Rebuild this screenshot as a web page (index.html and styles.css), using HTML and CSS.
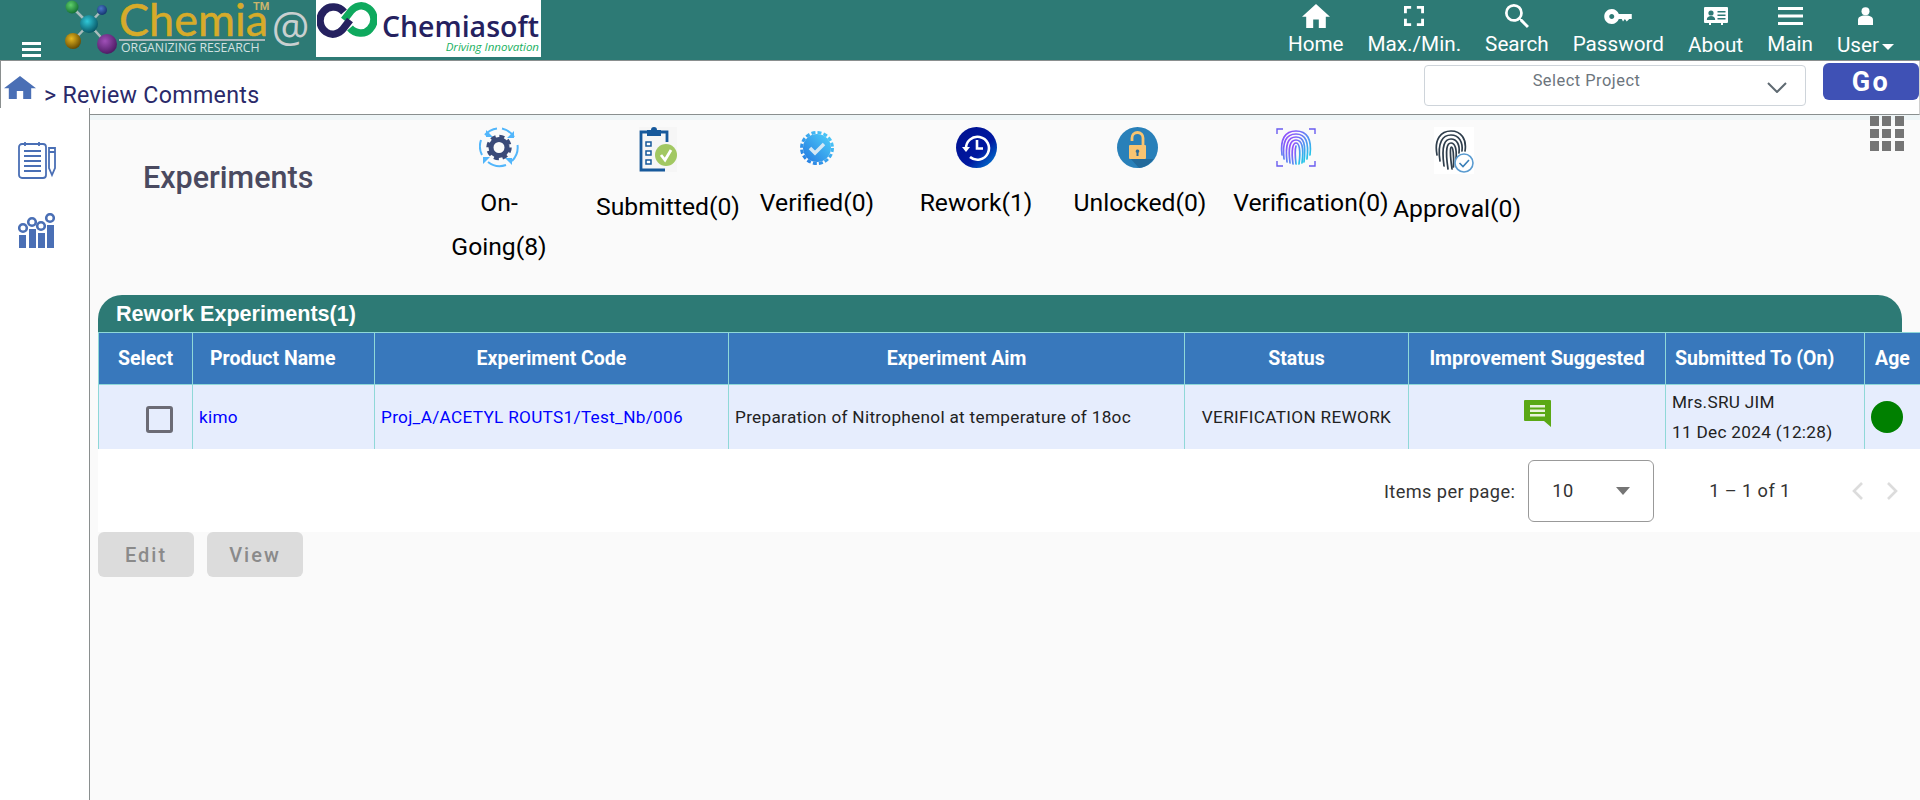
FILE: index.html
```html
<!DOCTYPE html>
<html lang="en">
<head>
<meta charset="UTF-8">
<meta name="viewport" content="width=device-width, initial-scale=1.0">
<title>Review Comments</title>
<link rel="stylesheet" href="styles.css">
</head>
<body>
<header class="topbar">
  <svg class="menu-toggle" viewBox="0 0 19 15"><path d="M0 0h19v3H0zM0 6h19v3H0zM0 12h19v3H0z" fill="#fff"/></svg>
  <svg class="molecule" viewBox="0 0 58 56">
    <defs>
      <radialGradient id="ballGreen" cx=".4" cy=".35" r=".7"><stop offset="0" stop-color="#5fd06a"/><stop offset="1" stop-color="#0f6a30"/></radialGradient>
      <radialGradient id="ballBlue" cx=".4" cy=".35" r=".7"><stop offset="0" stop-color="#4a78c8"/><stop offset="1" stop-color="#12306a"/></radialGradient>
      <radialGradient id="ballCyan" cx=".4" cy=".35" r=".7"><stop offset="0" stop-color="#30c8d8"/><stop offset="1" stop-color="#06505e"/></radialGradient>
      <radialGradient id="ballGold" cx=".4" cy=".35" r=".7"><stop offset="0" stop-color="#e8b820"/><stop offset="1" stop-color="#5e4400"/></radialGradient>
      <radialGradient id="ballPurple" cx=".4" cy=".35" r=".7"><stop offset="0" stop-color="#a050b8"/><stop offset="1" stop-color="#48185e"/></radialGradient>
    </defs>
    <path d="M7 7L24 24M37 10L24 24M8 41L24 24M42 44L24 24" stroke="#a8bcbc" stroke-width="2.5"/>
    <circle cx="7" cy="7" r="6.5" fill="url(#ballGreen)"/>
    <circle cx="37" cy="10" r="5" fill="url(#ballBlue)"/>
    <circle cx="24" cy="24" r="9" fill="url(#ballCyan)"/>
    <circle cx="8" cy="41" r="8" fill="url(#ballGold)"/>
    <circle cx="42" cy="44" r="10" fill="url(#ballPurple)"/>
  </svg>
  <div class="brand">
    <span class="brand-name">Chemia</span>
    <span class="brand-tm">TM</span>
    <span class="brand-tag">ORGANIZING RESEARCH</span>
  </div>
  <span class="brand-at">@</span>
  <div class="partner">
    <svg class="partner-mark" viewBox="0 0 60 36" fill="none" stroke-width="7.5">
      <path d="M33 26C38 32 48 33 53 27C59 21 58 11 51 6C45 2 38 4 34 9L27 18" stroke="#0fa95e"/>
      <path d="M27 10C22 4 12 3 7 9C1 15 2 25 9 30C15 34 22 32 26 27L33 18" stroke="#25215f"/>
    </svg>
    <div class="partner-text">
      <span class="partner-name">Chemiasoft</span>
      <span class="partner-tag">Driving Innovation</span>
    </div>
  </div>
  <nav class="topnav">
    <a class="topnav-item">
      <span class="topnav-icon"><svg width="28" height="24" viewBox="2 3 20 17"><path d="M10 20v-6h4v6h5v-8h3L12 3 2 12h3v8z" fill="#fff"/></svg></span>
      <span class="topnav-label">Home</span>
    </a>
    <a class="topnav-item">
      <span class="topnav-icon"><svg width="20" height="20" viewBox="5 5 14 14"><path d="M7 14H5v5h5v-2H7v-3zm-2-4h2V7h3V5H5v5zm12 7h-3v2h5v-5h-2v3zM14 5v2h3v3h2V5h-5z" fill="#fff"/></svg></span>
      <span class="topnav-label">Max./Min.</span>
    </a>
    <a class="topnav-item">
      <span class="topnav-icon"><svg width="26" height="24" viewBox="3 3 17.5 17.5"><path d="M15.5 14h-.79l-.28-.27A6.47 6.47 0 0 0 16 9.5 6.5 6.5 0 1 0 9.5 16c1.61 0 3.09-.59 4.23-1.57l.27.28v.79l5 4.99L20.49 19l-4.99-5zm-6 0C7.01 14 5 11.99 5 9.5S7.01 5 9.5 5 14 7.01 14 9.5 11.99 14 9.5 14z" fill="#fff"/></svg></span>
      <span class="topnav-label">Search</span>
    </a>
    <a class="topnav-item">
      <span class="topnav-icon"><svg width="30" height="15" viewBox="1 6 22 12"><path d="M12.65 10C11.83 7.67 9.61 6 7 6c-3.31 0-6 2.69-6 6s2.69 6 6 6c2.61 0 4.83-1.67 5.65-4H15l1 2 1.5-2 1.5 2 2-2h2v-4H12.65zM7 14c-1.1 0-2-.9-2-2s.9-2 2-2 2 .9 2 2-.9 2-2 2z" fill="#fff"/></svg></span>
      <span class="topnav-label">Password</span>
    </a>
    <a class="topnav-item">
      <span class="topnav-icon"><svg width="24" height="18" viewBox="0 0 24 18"><path d="M1 0h22a1 1 0 0 1 1 1v14a1 1 0 0 1-1 1h-4v2h-2v-2H7v2H5v-2H1a1 1 0 0 1-1-1V1a1 1 0 0 1 1-1z" fill="#fff"/><circle cx="7" cy="6" r="2.6" fill="#2d7a75"/><path d="M2.800 13c0-3 2-4 4.200-4s4.200 1 4.200 4zM13.500 4h8v1.500h-8zM13.500 7.500h8V9h-8zM13.500 11h8v1.500h-8z" fill="#2d7a75"/></svg></span>
      <span class="topnav-label topnav-label-low">About</span>
    </a>
    <a class="topnav-item">
      <span class="topnav-icon"><svg width="25" height="18" viewBox="0 0 25 18"><path d="M0 0h25v3H0zM0 7.500h25v3H0zM0 15h25v3H0z" fill="#fff"/></svg></span>
      <span class="topnav-label">Main</span>
    </a>
    <a class="topnav-item">
      <span class="topnav-icon"><svg width="15" height="18" viewBox="0 0 15 18"><circle cx="7.500" cy="4.200" r="4" fill="#fff"/><path d="M0 18v-5c0-3 2.500-4.500 7.500-4.500S15 10 15 13v5z" fill="#fff"/></svg></span>
      <span class="topnav-label topnav-label-low">User<i class="caret"></i></span>
    </a>
  </nav>
</header>

<div class="subbar">
  <div class="crumbs">
    <svg class="crumbs-home" width="32" height="23" viewBox="2 3 20 17" preserveAspectRatio="none"><path d="M10 20v-6h4v6h5v-8h3L12 3 2 12h3v8z" fill="#4a6fb5"/></svg>
    <span class="crumbs-text">&gt; Review Comments</span>
  </div>
  <div class="project-select">
    <span>Select Project</span>
    <svg class="project-chevron" width="20" height="11" viewBox="0 0 20 11"><path d="M1 1l9 9 9-9" fill="none" stroke="#5f6a72" stroke-width="2"/></svg>
  </div>
  <button class="go-btn">Go</button>
</div>

<div class="workspace">
  <aside class="sidebar">
    <svg class="side-icon" width="38" height="37" viewBox="0 0 38 37" fill="none" stroke="#4a6fb5" stroke-width="1.800">
      <rect x="1" y="2" width="27" height="34" rx="3"/>
      <path d="M7 0v4M21 0v4M6 9h17M6 14h17M6 19h17M6 24h17M6 29h17"/>
      <path d="M31 6h6v20l-3 7-3-7zM31 10h6" />
    </svg>
    <svg class="side-icon" width="37" height="35" viewBox="0 0 37 35">
      <path d="M1 22h7v13H1zM11 16h7v19h-7zM20 20h7v15h-7zM29 12h7v23h-7z" fill="#4a6fb5"/>
      <g fill="#fff" stroke="#4a6fb5" stroke-width="2.600">
        <circle cx="5" cy="15" r="3.800"/><circle cx="14" cy="9" r="3.800"/><circle cx="23" cy="13" r="3.800"/><circle cx="32" cy="5" r="3.800"/>
      </g>
    </svg>
  </aside>

  <main class="content">
    <div class="content-top"></div>
    <div class="content-band"></div>
    <svg class="apps-grid" width="34" height="35" viewBox="0 0 34 35"><path d="M0 0h9v10H0zM12 0h9v10h-9zM25 0h9v10h-9zM0 13h9v9H0zM12 13h9v9h-9zM25 13h9v9h-9zM0 25h9v10H0zM12 25h9v10h-9zM25 25h9v10h-9z" fill="#757575"/></svg>

    <section class="exp-tabs">
      <h2 class="exp-title">Experiments</h2>

      <div class="exp-tab">
        <svg class="exp-icon" width="40" height="41" viewBox="0 0 40 41">
          <g fill="none" stroke="#52b6fb" stroke-width="2">
            <path d="M6 8A19 19 0 0 1 18 1.500M23 1.500A19 19 0 0 1 35 10M38.500 18A19 19 0 0 1 33 34M27 38A19 19 0 0 1 9 35M3 28A19 19 0 0 1 2 13"/>
          </g>
          <path d="M35 4v7h-7zM7 3v7h7zM33 38v-7h-7zM4 37v-7h7z" fill="#52b6fb"/>
          <circle cx="20" cy="20.500" r="8" fill="none" stroke="#3a4a78" stroke-width="5"/>
          <circle cx="20" cy="20.500" r="11" fill="none" stroke="#3a4a78" stroke-width="3.500" stroke-dasharray="5 3.640"/>
        </svg>
        <span class="exp-label exp-label-wrap">On-Going(8)</span>
      </div>

      <div class="exp-tab">
        <svg class="exp-icon exp-icon-submitted" width="38" height="45" viewBox="0 0 38 45">
          <rect width="38" height="45" fill="#f6f6f6"/>
          <path d="M8 5H2v38h24" fill="none" stroke="#17599b" stroke-width="2.800"/>
          <path d="M22 5h6v10" fill="none" stroke="#17599b" stroke-width="2.800"/>
          <path d="M8 3h4a3 3 0 0 1 6 0h4v6H8z" fill="#17599b"/>
          <path d="M7 15h5v4H7zM7 24h5v4H7zM7 33h5v4H7z" fill="#fff" stroke="#17599b" stroke-width="1.500"/>
          <circle cx="27" cy="28" r="11" fill="#a2c862"/>
          <path d="M22 28l4 5 6-10" fill="none" stroke="#fff" stroke-width="2.800"/>
        </svg>
        <span class="exp-label">Submitted(0)</span>
      </div>

      <div class="exp-tab">
        <svg class="exp-icon" width="40" height="41" viewBox="0 0 40 41">
          <defs><linearGradient id="badgeFill" x1="0" y1="1" x2="1" y2="0"><stop offset="0" stop-color="#2478e0"/><stop offset="1" stop-color="#4fd0fa"/></linearGradient></defs>
          <circle cx="20" cy="21" r="14" fill="url(#badgeFill)"/>
          <circle cx="20" cy="21" r="15.500" fill="none" stroke="url(#badgeFill)" stroke-width="3" stroke-dasharray="4 2.090"/>
          <path d="M13 21l5 5 9-9" fill="none" stroke="#d5e8f5" stroke-width="3.500"/>
        </svg>
        <span class="exp-label">Verified(0)</span>
      </div>

      <div class="exp-tab">
        <svg class="exp-icon" width="41" height="41" viewBox="0 0 41 41">
          <defs><linearGradient id="reworkFill" x1="0" y1="0" x2="1" y2="1"><stop offset="0" stop-color="#00108e"/><stop offset=".6" stop-color="#0018a0"/><stop offset="1" stop-color="#0088d8"/></linearGradient></defs>
          <circle cx="20.500" cy="20.500" r="20.500" fill="url(#reworkFill)"/>
          <path d="M10 22A11.500 11.500 0 1 1 14 30" fill="none" stroke="#fff" stroke-width="2.600"/>
          <path d="M6 20h8l-4 5z" fill="#fff"/>
          <path d="M21 13v8.500h6" fill="none" stroke="#fff" stroke-width="2.600"/>
        </svg>
        <span class="exp-label">Rework(1)</span>
      </div>

      <div class="exp-tab">
        <svg class="exp-icon exp-icon-unlocked" width="41" height="41" viewBox="0 0 41 41">
          <circle cx="20.500" cy="20.500" r="20.500" fill="#2980b9"/>
          <path d="M13 20h15v12l8.500 0A20.500 20.500 0 0 1 22 40.900L13 31z" fill="#236a9b"/>
          <path d="M26 18v-7a5.500 5.500 0 0 0-11 0v3" fill="none" stroke="#f8c471" stroke-width="2.800"/>
          <rect x="12" y="18" width="17" height="14" rx="1" fill="#f8c471"/>
          <path d="M20.500 22.500a1.800 1.800 0 0 1 1 3.300V29h-2v-3.200a1.800 1.800 0 0 1 1-3.300z" fill="#2a6a96"/>
        </svg>
        <span class="exp-label">Unlocked(0)</span>
      </div>

      <div class="exp-tab">
        <svg class="exp-icon exp-icon-print" width="40" height="41" viewBox="0 0 40 41">
          <defs><linearGradient id="printFill" x1="0" y1="0" x2="1" y2="1"><stop offset="0" stop-color="#a040ff"/><stop offset="1" stop-color="#20c8e8"/></linearGradient></defs>
          <path d="M1 7V2h6M33 2h6v5M1 34v5h6M33 39h6v-5" fill="none" stroke="#6a5cf0" stroke-width="1.400"/>
          <g fill="none" stroke="url(#printFill)" stroke-width="1.700" stroke-linecap="round">
            <path d="M6 28C4 12 9 4 20 4s16 8 14 24"/>
            <path d="M8 32C6 15 10 7 20 7s13 8 11 25"/>
            <path d="M11 35C9 17 12 10 20 10s10 7 8 25"/>
            <path d="M14 36C12 20 14 13 20 13s8 7 6 23"/>
            <path d="M17 37C15 22 17 16 20 16s5 6 3 21"/>
            <path d="M20 37C19 28 19 22 20 19"/>
          </g>
        </svg>
        <span class="exp-label">Verification(0)</span>
      </div>

      <div class="exp-tab">
        <svg class="exp-icon exp-icon-approval" width="40" height="47" viewBox="0 0 40 47">
          <rect width="40" height="47" fill="#fff"/>
          <g fill="none" stroke="#2f3e4c" stroke-width="1.700" stroke-linecap="round">
            <path d="M3 28C0 12 7 4 17 4s16 8 14 20"/>
            <path d="M6 34C3 15 9 8 17 8s12 7 11 16"/>
            <path d="M10 39C7 18 11 12 17 12s9 6 8 14"/>
            <path d="M14 42C11 22 13 16 17 16s6 6 5 16"/>
            <path d="M18 42C16 28 16 20 17.500 20s2.500 8 2 20"/>
          </g>
          <circle cx="30" cy="36" r="9" fill="#fff" stroke="#5a9bd0" stroke-width="1.600"/>
          <path d="M25.500 36l3.500 3.500 6-6.500" fill="none" stroke="#3a7fb8" stroke-width="1.600"/>
        </svg>
        <span class="exp-label">Approval(0)</span>
      </div>
    </section>

    <section class="rework">
      <div class="rework-title">Rework Experiments(1)</div>
      <table class="rework-table">
        <colgroup>
          <col class="col-select"><col class="col-product"><col class="col-code"><col class="col-aim">
          <col class="col-status"><col class="col-improve"><col class="col-submitted"><col class="col-age">
        </colgroup>
        <thead>
          <tr>
            <th>Select</th>
            <th class="th-left th-product">Product Name</th>
            <th>Experiment Code</th>
            <th>Experiment Aim</th>
            <th>Status</th>
            <th>Improvement Suggested</th>
            <th class="th-left th-submitted">Submitted To (On)</th>
            <th>Age</th>
          </tr>
        </thead>
        <tbody>
          <tr>
            <td class="cell-check"><span class="checkbox"></span></td>
            <td class="cell-link">kimo</td>
            <td class="cell-link">Proj_A/ACETYL ROUTS1/Test_Nb/006</td>
            <td>Preparation of Nitrophenol at temperature of 18oc</td>
            <td class="cell-status">VERIFICATION REWORK</td>
            <td class="cell-comment">
              <svg width="27" height="27" viewBox="0 0 27 27"><path d="M1 0h25a1 1 0 0 1 1 1v26l-7-6H1a1 1 0 0 1-1-1V1a1 1 0 0 1 1-1z" fill="#5aa815"/><path d="M6 5h15v2.500H6zM6 9.500h15V12H6zM6 14h15v2.500H6z" fill="#e8f2dc"/></svg>
            </td>
            <td class="cell-submitted">Mrs.SRU JIM<br>11 Dec 2024 (12:28)</td>
            <td class="cell-age"><span class="age-dot"></span></td>
          </tr>
        </tbody>
      </table>
      <div class="paginator">
        <span class="paginator-label">Items per page:</span>
        <div class="page-size">
          <span>10</span>
          <i class="page-size-arrow"></i>
        </div>
        <span class="paginator-range">1 – 1 of 1</span>
        <svg class="paginator-nav" width="48" height="18" viewBox="0 0 48 18" fill="none" stroke="#dcdcdc" stroke-width="2.600"><path d="M11 1L3 9l8 8M37 1l8 8-8 8"/></svg>
      </div>
    </section>

    <div class="actions">
      <button class="action-btn">Edit</button>
      <button class="action-btn">View</button>
    </div>
  </main>
</div>
</body>
</html>
```

FILE: styles.css
```css
/* Page */
html, body {
  margin: 0;
  height: 100%;
}
body {
  display: flex;
  flex-direction: column;
  height: 800px;
  overflow: hidden;
  font-family: Roboto, "Liberation Sans", sans-serif;
  background-color: #fff;
}

/* Top bar */
.topbar {
  display: flex;
  flex: none;
  height: 60px;
  background-color: #2d7a75;
  border-bottom: 1px solid #8a8f8f;
  color: #fff;
}
.menu-toggle {
  flex: none;
  width: 19px;
  height: 15px;
  margin: 42px 0 0 22px;
}
.molecule {
  flex: none;
  width: 58px;
  height: 56px;
  margin-left: 24px;
}
.brand {
  position: relative;
  flex: none;
  width: 146px;
  margin-left: -4px;
  display: flex;
  flex-direction: column;
}
.brand-name {
  font-family: Lato, sans-serif;
  font-size: 45px;
  line-height: 39px;
  height: 39px;
  color: #d6ab2a;
  -webkit-text-stroke: .5px #d6ab2a;
  border-bottom: 2px solid #a9b7b9;
}
.brand-tm {
  position: absolute;
  top: 0;
  left: 134px;
  font-size: 11px;
  font-weight: 700;
  color: #c9b56c;
}
.brand-tag {
  margin-left: 2px;
  font-family: "Open Sans", sans-serif;
  font-size: 12.300px;
  line-height: 14px;
  white-space: nowrap;
  color: #d3e2e2;
}
.brand-at {
  flex: none;
  width: 51px;
  font-family: "Open Sans", sans-serif;
  font-size: 42px;
  line-height: 52px;
  text-align: center;
  color: #c9d0d0;
}
.partner {
  flex: none;
  display: flex;
  width: 225px;
  height: 57px;
  background-color: #fff;
}
.partner-mark {
  flex: none;
  width: 60px;
  height: 36px;
  margin: 2px 0 0 1px;
}
.partner-text {
  display: flex;
  flex-direction: column;
  align-items: flex-end;
  width: 154px;
  margin: 11px 0 0 8px;
}
.partner-name {
  font-family: "Open Sans", sans-serif;
  font-size: 28.500px;
  font-weight: 600;
  line-height: 30px;
  color: #25215f;
}
.partner-tag {
  font-family: "Open Sans", sans-serif;
  font-size: 11.500px;
  font-style: italic;
  line-height: 12px;
  white-space: nowrap;
  color: #18b060;
}
.topnav {
  display: flex;
  gap: 24px;
  margin-left: auto;
  padding-right: 26px;
}
.topnav-item {
  display: flex;
  flex-direction: column;
  align-items: center;
}
.topnav-icon {
  display: flex;
  align-items: center;
  justify-content: center;
  height: 32px;
}
.topnav-label {
  margin-top: 1px;
  font-size: 20.700px;
  line-height: 23px;
  white-space: nowrap;
}
.topnav-label-low {
  margin-top: 2px;
}
.caret {
  display: inline-block;
  margin-left: 3px;
  vertical-align: 2px;
  border-style: solid;
  border-width: 6px 6px 0;
  border-color: #fff transparent transparent;
}

/* Breadcrumb row */
.subbar {
  display: flex;
  flex: none;
  height: 47px;
  background-color: #fff;
  border-left: 1px solid #8a8f8f;
  border-right: 1px solid #d0d0d0;
}
.crumbs {
  display: flex;
  align-items: flex-start;
  flex: 1;
}
.crumbs-home {
  margin: 15px 0 0 3px;
}
.crumbs-text {
  margin: 21px 0 0 8px;
  font-size: 23.200px;
  line-height: 26px;
  letter-spacing: .3px;
  color: #2a2a6a;
  white-space: nowrap;
}
.project-select {
  position: relative;
  display: flex;
  justify-content: center;
  width: 382px;
  height: 41px;
  margin-top: 4px;
  padding-right: 57px;
  box-sizing: border-box;
  background-color: #fff;
  border: 1px solid #ced4da;
  border-radius: 4px;
  font-size: 16.400px;
  line-height: 30px;
  letter-spacing: .5px;
  color: #6c757d;
}
.project-chevron {
  position: absolute;
  top: 16px;
  right: 18px;
}
.go-btn {
  width: 96px;
  height: 37px;
  margin: 2px 0 0 17px;
  padding: 0;
  border: 0;
  border-radius: 6px;
  background-color: #3f51b5;
  color: #fff;
  font-family: Roboto, sans-serif;
  font-size: 27px;
  font-weight: 700;
  letter-spacing: 2.500px;
}

/* Sidebar + main */
.workspace {
  display: flex;
  flex: 1;
  min-height: 0;
}
.sidebar {
  flex: none;
  display: flex;
  flex-direction: column;
  align-items: flex-start;
  gap: 34px;
  width: 90px;
  padding: 34px 0 0 18px;
  box-sizing: border-box;
  border-right: 1px solid #8a8f8f;
}
.side-icon {
  display: block;
}
.content {
  position: relative;
  flex: 1;
  min-width: 0;
  background-color: #fafafa;
}
.content-top {
  height: 6px;
  background-color: #fff;
  border-bottom: 1px solid #8a8f8f;
  border-right: 1px solid #d0d0d0;
}
.content-band {
  height: 5px;
  background-color: #eef5f7;
}
.apps-grid {
  position: absolute;
  top: 8px;
  right: 16px;
}

/* Status tabs */
.exp-tabs {
  display: grid;
  grid-template-columns: 298px 206px 132px 166px 152px 176px 166px 126px;
  height: 175px;
  margin-left: 8px;
  padding-top: 7px;
  box-sizing: border-box;
}
.exp-title {
  margin: 34px 0 0 45px;
  font-size: 30.500px;
  font-weight: 500;
  line-height: 34px;
  color: #4a4a60;
}
.exp-tab {
  display: flex;
  flex-direction: column;
  align-items: center;
  text-align: center;
}
.exp-icon {
  flex: none;
  display: block;
}
.exp-icon-submitted {
  margin-right: 20px;
}
.exp-icon-unlocked {
  margin-right: 6px;
}
.exp-icon-print {
  margin-right: 30px;
}
.exp-icon-approval {
  margin-right: 6px;
}
.exp-label {
  margin-top: 13px;
  font-size: 24.700px;
  line-height: 44px;
  white-space: nowrap;
  color: #000;
}
.exp-label-wrap {
  width: 120px;
  white-space: normal;
}

/* Rework table */
.rework {
  margin-left: 8px;
}
.rework-title {
  width: 1804px;
  height: 37px;
  padding-left: 18px;
  box-sizing: border-box;
  background-color: #2d7a75;
  border-radius: 24px 24px 0 0;
  font-family: "Liberation Sans", sans-serif;
  font-size: 21.600px;
  font-weight: 700;
  line-height: 37px;
  color: #fff;
}
.rework-table {
  width: 1822px;
  table-layout: fixed;
  border-collapse: collapse;
  font-size: 17.200px;
}
.col-select { width: 94px; }
.col-product { width: 182px; }
.col-code { width: 354px; }
.col-aim { width: 456px; }
.col-status { width: 224px; }
.col-improve { width: 257px; }
.col-submitted { width: 199px; }
.col-age { width: 56px; }
.rework-table th,
.rework-table td {
  border: 1px solid #8fd8d8;
}
.rework-table th {
  height: 51px;
  padding: 0;
  background-color: #3878bc;
  color: #fff;
  font-size: 19.500px;
  font-weight: 700;
  white-space: nowrap;
}
.rework-table .th-left {
  text-align: left;
}
.rework-table .th-product {
  padding-left: 17px;
}
.rework-table .th-submitted {
  padding-left: 9px;
}
.rework-table td {
  height: 56px;
  padding: 0 6px;
  background-color: #e6edfd;
  border-bottom: 0;
  color: #222;
  letter-spacing: .3px;
  white-space: nowrap;
  overflow: hidden;
}
.rework-table .cell-link {
  color: #00f;
}
.rework-table .cell-check {
  padding: 4px 0 0 47px;
}
.checkbox {
  display: block;
  width: 27px;
  height: 27px;
  box-sizing: border-box;
  border: 3.500px solid #6b6b75;
  border-radius: 3px;
}
.cell-status {
  text-align: center;
}
.rework-table .cell-comment {
  text-align: center;
  padding: 0 0 8px;
}
.cell-comment svg {
  display: block;
  margin: 0 auto;
}
.rework-table .cell-submitted {
  line-height: 30px;
}
.rework-table .cell-age {
  padding: 0 0 0 6px;
}
.age-dot {
  display: block;
  width: 32px;
  height: 32px;
  border-radius: 50%;
  background-color: #008000;
}

/* Paginator */
.paginator {
  display: flex;
  align-items: center;
  height: 83px;
  background-color: #fff;
  font-size: 18.200px;
  color: #333;
  letter-spacing: .4px;
}
.paginator-label {
  margin-left: 1286px;
  padding-top: 2px;
}
.page-size {
  display: flex;
  align-items: center;
  justify-content: space-between;
  width: 126px;
  height: 62px;
  margin-left: 13px;
  padding: 0 23px;
  box-sizing: border-box;
  border: 1px solid #999;
  border-radius: 6px;
}
.page-size-arrow {
  border-style: solid;
  border-width: 8px 7px 0;
  border-color: #757575 transparent transparent;
}
.paginator-range {
  margin-left: 55px;
}
.paginator-nav {
  margin-left: 60px;
}

/* Bottom buttons */
.actions {
  display: flex;
  gap: 13px;
  margin-left: 8px;
}
.action-btn {
  width: 96px;
  height: 45px;
  padding: 0;
  border: 0;
  border-radius: 6px;
  background-color: #dcdcdc;
  color: #8a8a8a;
  font-family: Roboto, sans-serif;
  font-size: 20px;
  font-weight: 500;
  letter-spacing: 2px;
}
```
